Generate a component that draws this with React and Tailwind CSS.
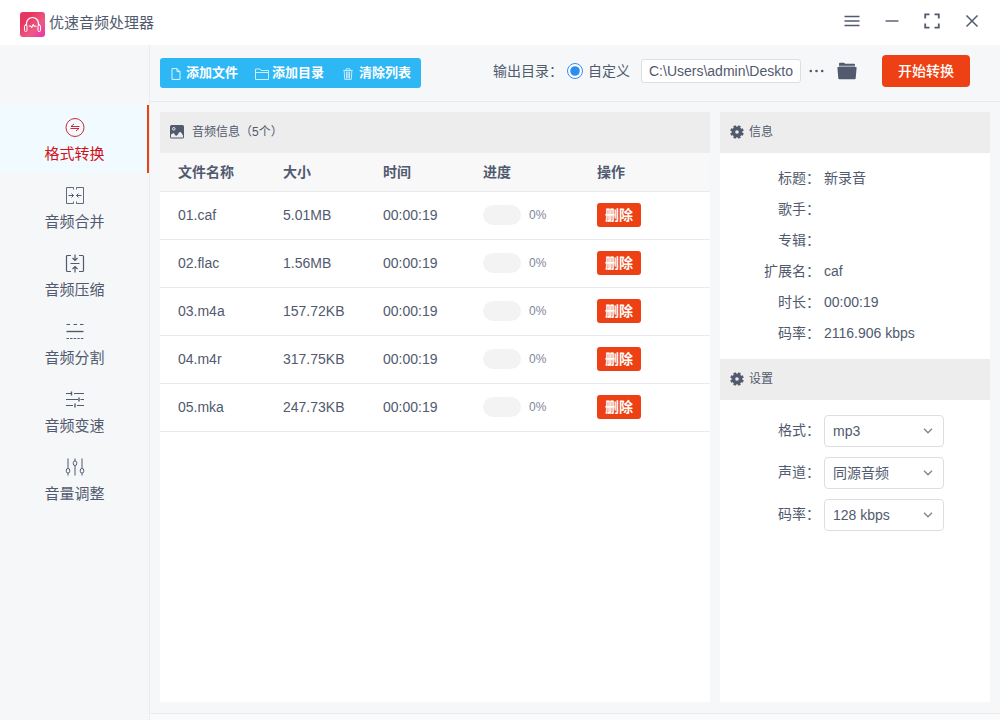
import { useState } from 'react';

const FILES = [
  { name: '01.caf', size: '5.01MB', time: '00:00:19', progress: 0 },
  { name: '02.flac', size: '1.56MB', time: '00:00:19', progress: 0 },
  { name: '03.m4a', size: '157.72KB', time: '00:00:19', progress: 0 },
  { name: '04.m4r', size: '317.75KB', time: '00:00:19', progress: 0 },
  { name: '05.mka', size: '247.73KB', time: '00:00:19', progress: 0 },
];

const INFO = [
  ['标题', '新录音'],
  ['歌手', ''],
  ['专辑', ''],
  ['扩展名', 'caf'],
  ['时长', '00:00:19'],
  ['码率', '2116.906 kbps'],
];

const SETTINGS = [
  { id: 'format', label: '格式', options: ['mp3', 'wav', 'flac', 'm4a'] },
  { id: 'channel', label: '声道', options: ['同源音频', '单声道', '立体声'] },
  { id: 'bitrate', label: '码率', options: ['128 kbps', '192 kbps', '320 kbps'] },
];

const NAV = [
  {
    id: 'convert',
    label: '格式转换',
    icon: (
      <>
        <circle cx="10" cy="10.500" r="9" strokeWidth=".9" />
        <path d="M14.500 9.500H6L9 7M5.500 11.500H14l-3 2.500" strokeWidth=".9" />
      </>
    ),
  },
  {
    id: 'merge',
    label: '音频合并',
    icon: (
      <>
        <path d="M8.500 4.500V2.500h-7v16h7v-2M11.500 4.500V2.500h7v16h-7v-2" strokeWidth=".9" />
        <path d="M3.500 10.500h5M6.500 8.500l2 2-2 2M16.500 10.500h-5M13.500 8.500l-2 2 2 2" />
      </>
    ),
  },
  {
    id: 'compress',
    label: '音频压缩',
    icon: (
      <>
        <path d="M6 2.500H2.500q-1 0-1 1v14q0 1 1 1H6M14 2.500h3.500q1 0 1 1v14q0 1-1 1H14" strokeWidth="1.200" />
        <path d="M5.500 10.500h9M10 1.500v6M7.500 5L10 7.500 12.500 5M10 19.500v-6M7.500 16l2.500-2.500 2.500 2.500" strokeWidth="1.200" />
      </>
    ),
  },
  {
    id: 'split',
    label: '音频分割',
    icon: (
      <>
        <path d="M1.500 3.500H5M8.500 3.500H12M15 3.500h3.500" strokeWidth="1.200" />
        <path d="M1.500 10.500h17" strokeWidth="1.400" />
        <path d="M1.500 17.500h17" strokeDasharray="2.400 1.200" />
      </>
    ),
  },
  {
    id: 'speed',
    label: '音频变速',
    icon: (
      <>
        <path d="M1 4.500h5M9 4.500h10M1 10.500h12M15.500 10.500H19M1 16.500h7M12 16.500h7" strokeWidth="1.200" />
        <path d="M6.500 2.500v4M14 8.500v4M10 14.500v4" strokeWidth="1.400" />
      </>
    ),
  },
  {
    id: 'volume',
    label: '音量调整',
    icon: (
      <>
        <path d="M3 1.500v10M3 16v2.500M10 1.500V4M10 8.500v10M17 1.500v10M17 16v2.500" />
        <rect x="1.300" y="11.500" width="3.400" height="4.500" rx="1.600" />
        <rect x="8.300" y="4" width="3.400" height="4.500" rx="1.600" />
        <rect x="15.300" y="11.500" width="3.400" height="4.500" rx="1.600" />
      </>
    ),
  },
];

const Logo = () => (
  <svg width="25" height="25" viewBox="0 0 25 25" fill="none" aria-hidden="true">
    <defs>
      <linearGradient id="logo-bg" x1="0" y1="0" x2="1" y2="1">
        <stop offset="0.25" stopColor="#e8355f" />
        <stop offset="0.65" stopColor="#ec5a86" />
        <stop offset="1" stopColor="#ea2fae" />
      </linearGradient>
    </defs>
    <rect width="25" height="25" rx="3" fill="url(#logo-bg)" />
    <g stroke="#fff" strokeLinecap="round" strokeLinejoin="round">
      <path d="M6.500 13v-1.500a6 6 0 0 1 12 0V13" strokeWidth="1.200" />
      <rect x="4.500" y="13" width="2.500" height="6.500" rx="1.200" strokeWidth="1" />
      <rect x="18" y="13" width="2.500" height="6.500" rx="1.200" strokeWidth="1" />
      <path d="M9 14h1.500l1.200 1.500 1.500-3 1 1.800H16" strokeWidth="1.100" />
    </g>
  </svg>
);

// Eight teeth, turned by half a step so that the gaps face up and sideways.
const GearIcon = () => (
  <svg width="14" height="14" viewBox="0 0 14 14" fill="none" stroke="currentColor" aria-hidden="true">
    <circle cx="7" cy="7" r="3.600" strokeWidth="3.600" />
    <g transform="rotate(22.5 7 7)" strokeWidth="2.700">
      <path d="M7 .2v2.500M7 11.300v2.500M.2 7h2.500M11.300 7h2.500" />
      <path d="M2.200 2.200L4 4M10 10l1.800 1.800M11.800 2.200L10 4M4 10l-1.800 1.800" />
    </g>
  </svg>
);

const ImageIcon = () => (
  <svg width="14" height="14" viewBox="0 0 14 14" aria-hidden="true">
    <rect width="14" height="13.500" rx="1.500" fill="currentColor" />
    <circle cx="3.800" cy="3.800" r="1.300" fill="none" stroke="#ededed" />
    <path d="M1 12.500V9.500l2.500-1.500 2.500 3 1.500-1 1.500-2.500q1.500-1 2.500.5l1.500 2.500v2z" fill="#ededed" />
  </svg>
);

const FolderIcon = () => (
  <svg width="20" height="18" viewBox="0 0 20 18" fill="currentColor" aria-hidden="true">
    <path d="M2 3.800V1.800Q2 .8 3 .8h4l1.200 1h8.800q1 0 1 1v1z" />
    <path d="M1 5h18q.7 0 .6.800l-.9 10.500q-.1 1-1 1H2.300q-.9 0-1-1L.4 5.800Q.3 5 1 5z" />
    <path d="M2 3.800h16V5H2z" opacity=".5" />
  </svg>
);

const PanelTitle = ({ icon, gap = 'gap-[5px]', children }) => (
  <h2 className={`flex h-[41px] shrink-0 items-center bg-[#ededed] px-[10px] pb-[2px] text-xs ${gap}`}>
    {icon}
    {children}
  </h2>
);

const TOOL_BUTTON = 'flex h-full items-center text-[13px] font-bold text-white';

const App = () => {
  const [active, setActive] = useState('convert');
  const [files, setFiles] = useState(FILES);
  const [path, setPath] = useState('C:\\Users\\admin\\Deskto');

  return (
    <div className="flex min-h-screen flex-col bg-[#f5f7f9] font-['Liberation_Sans','Noto_Sans_CJK_SC',sans-serif] text-sm text-[#515a6e]">
      <header className="flex h-[45px] items-center bg-white pr-[18px] pl-5">
        <div className="flex items-center gap-1 pt-1">
          <Logo />
          <h1 className="pb-1 text-[15px]">优速音频处理器</h1>
        </div>
        <div className="ml-auto flex items-center gap-5 pb-[3px]">
          <button type="button" aria-label="菜单" className="flex w-5 justify-center">
            <svg width="16" height="16" viewBox="0 0 16 16" stroke="currentColor" strokeWidth="1.400">
              <path d="M.5 3.500h15M.5 8h15M.5 12.500h15" />
            </svg>
          </button>
          <button type="button" aria-label="最小化" className="flex w-5 justify-center">
            <svg width="16" height="16" viewBox="0 0 16 16" stroke="currentColor" strokeWidth="1.400">
              <path d="M1.500 8h13" />
            </svg>
          </button>
          <button type="button" aria-label="最大化" className="flex w-5 justify-center">
            <svg width="16" height="16" viewBox="0 0 16 16" fill="none" stroke="currentColor" strokeWidth="1.800">
              <path d="M1.200 5.500V1.400H5.500M10.500 1.400h4.300v4.100M14.800 10.500v4.100h-4.300M5.500 14.600H1.200v-4.100" />
            </svg>
          </button>
          <button type="button" aria-label="关闭" className="flex w-5 justify-center">
            <svg width="16" height="16" viewBox="0 0 16 16" stroke="currentColor" strokeWidth="1.500">
              <path d="M2.500 2.500l11 11M13.500 2.500l-11 11" />
            </svg>
          </button>
        </div>
      </header>

      <div className="flex flex-1">
        <nav className="w-[150px] shrink-0 border-r border-[#ececec] pt-[60px]">
          {NAV.map(({ id, label, icon }) => (
            <button
              key={id}
              type="button"
              onClick={() => setActive(id)}
              className={`flex h-[68px] w-full flex-col items-center border-r-2 pt-3 pl-[2px] text-[15px] ${
                active === id
                  ? 'border-[#ed4014] bg-[#f0faff] text-[#d0101a]'
                  : 'border-transparent'
              }`}
            >
              <svg width="20" height="20" viewBox="0 0 20 20" fill="none" stroke="currentColor" aria-hidden="true">
                {icon}
              </svg>
              <span className="mt-[5px] leading-6">{label}</span>
            </button>
          ))}
        </nav>

        <main className="flex min-w-0 flex-1 flex-col">
          <div className="flex h-[57px] items-center border-b border-[#e8eaec] pr-[30px] pl-[10px]">
            <div className="flex h-[30px] shrink-0 gap-[17px] rounded-[3px] bg-[#2db7f5] pt-px pr-[10px] pl-[11px]">
              <button type="button" className={`${TOOL_BUTTON} gap-[5px]`}>
                <svg width="10" height="12" viewBox="0 0 10 12" fill="none" stroke="currentColor" opacity=".85">
                  <path d="M1 .6h5l3 3v7.800H1zM6 .6v3h3" />
                </svg>
                添加文件
              </button>
              <button type="button" className={`${TOOL_BUTTON} gap-[3px]`}>
                <svg width="14" height="12" viewBox="0 0 14 12" fill="none" stroke="currentColor" opacity=".75">
                  <path d="M.5 11.500V1h4.500l1 1.500h7.500v9zM.5 4.500h13" />
                </svg>
                添加目录
              </button>
              <button type="button" onClick={() => setFiles([])} className={`${TOOL_BUTTON} gap-[6px] pl-[2px]`}>
                <svg width="10" height="12" viewBox="0 0 10 12" fill="none" stroke="currentColor" opacity=".7">
                  <path d="M.3 2.500h9.400M3 2.500V.8h4v1.700M1.200 3l.5 8.400h6.600L8.800 3" />
                  <path d="M3.500 3.500v7M5 3.500v7M6.500 3.500v7" strokeWidth="1.100" />
                </svg>
                清除列表
              </button>
            </div>

            <div className="ml-auto flex shrink-0 items-center pb-1">
              <span>输出目录：</span>
              <label className="ml-1 flex items-center gap-[5px]">
                <input type="radio" name="output" defaultChecked className="size-4 accent-[#2d8cf0]" />
                自定义
              </label>
              <input
                type="text"
                aria-label="输出目录"
                value={path}
                onChange={(e) => setPath(e.target.value)}
                className="ml-[11px] h-6 w-40 rounded-[3px] border border-[#dcdee2] bg-white px-[7px]"
              />
              <button type="button" aria-label="更多" className="ml-2">
                <svg width="15" height="4" viewBox="0 0 15 4" fill="currentColor">
                  <circle cx="1.800" cy="2" r="1.300" />
                  <circle cx="7.500" cy="2" r="1.300" />
                  <circle cx="13.200" cy="2" r="1.300" />
                </svg>
              </button>
              <button type="button" aria-label="打开目录" className="ml-[13px]">
                <FolderIcon />
              </button>
              <button type="button" className="ml-[25px] h-8 rounded bg-[#ed4014] px-4 font-medium text-white">
                开始转换
              </button>
            </div>
          </div>

          <div className="flex flex-1 gap-[10px] px-[10px] pt-[10px] pb-[11px]">
            <section className="min-w-0 flex-1 bg-white">
              <PanelTitle icon={<ImageIcon />} gap="gap-2">音频信息（5个）</PanelTitle>
              <table className="w-full table-fixed text-left">
                <thead>
                  <tr className="h-[38px] border-b border-[#e8eaec] bg-[#f8f8f9]">
                    <th className="w-[123px] pl-[18px]">文件名称</th>
                    <th className="w-[100px]">大小</th>
                    <th className="w-[100px]">时间</th>
                    <th className="w-[114px]">进度</th>
                    <th>操作</th>
                  </tr>
                </thead>
                <tbody>
                  {files.map((file) => (
                    <tr key={file.name} className="h-12 border-b border-[#e8eaec]">
                      <td className="pl-[18px]">{file.name}</td>
                      <td>{file.size}</td>
                      <td>{file.time}</td>
                      <td>
                        <div className="flex items-center gap-2">
                          <div className="h-5 w-[38px] overflow-hidden rounded-full bg-[#f3f3f3]">
                            <div className="h-full bg-[#2db7f5]" style={{ width: `${file.progress}%` }} />
                          </div>
                          <span className="text-xs text-[#808695]">{file.progress}%</span>
                        </div>
                      </td>
                      <td>
                        <button
                          type="button"
                          onClick={() => setFiles(files.filter((f) => f !== file))}
                          className="block h-6 rounded-[3px] bg-[#ed4014] px-2 text-sm font-bold text-white"
                        >
                          删除
                        </button>
                      </td>
                    </tr>
                  ))}
                </tbody>
              </table>
            </section>

            <aside className="w-[270px] shrink-0 bg-white">
              <PanelTitle icon={<GearIcon />}>信息</PanelTitle>
              <dl className="pt-[9px] pb-[11px]">
                {INFO.map(([label, value]) => (
                  <div key={label} className="flex h-[31px] items-center gap-1">
                    <dt className="w-[100px] text-right">{label}：</dt>
                    <dd>{value}</dd>
                  </div>
                ))}
              </dl>
              <PanelTitle icon={<GearIcon />}>设置</PanelTitle>
              <form className="flex flex-col gap-[10px] pt-[15px]">
                {SETTINGS.map(({ id, label, options }) => (
                  <div key={id} className="flex items-center gap-1">
                    <label htmlFor={id} className="w-[100px] pb-[2px] text-right">{label}：</label>
                    <div className="relative">
                      <select
                        id={id}
                        className="h-8 w-[120px] appearance-none rounded border border-[#dcdee2] bg-white px-2"
                      >
                        {options.map((o) => <option key={o}>{o}</option>)}
                      </select>
                      <svg
                        width="10"
                        height="6"
                        viewBox="0 0 10 6"
                        fill="none"
                        stroke="#808695"
                        strokeWidth="1.400"
                        className="pointer-events-none absolute top-[13px] right-[11px]"
                      >
                        <path d="M1 .8l4 4 4-4" />
                      </svg>
                    </div>
                  </div>
                ))}
              </form>
            </aside>
          </div>

          <footer className="h-[7px] border-t border-[#e8eaec] bg-[#fafafa]" />
        </main>
      </div>
    </div>
  );
};

export default App;
